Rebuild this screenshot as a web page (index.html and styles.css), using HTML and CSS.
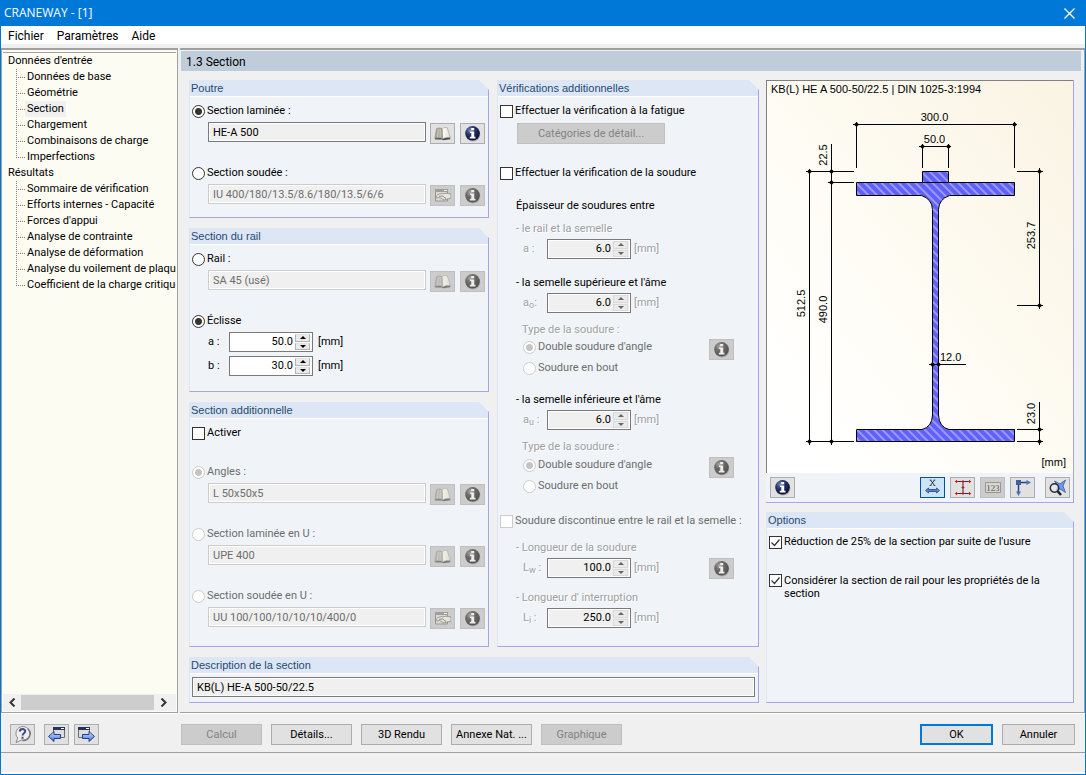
FILE: index.html
```html
<!DOCTYPE html>
<html lang="fr">
<head>
<meta charset="utf-8">
<meta name="viewport" content="width=device-width, initial-scale=1">
<title>CRANEWAY - [1]</title>
<link rel="stylesheet" href="styles.css">
</head>
<body>
<svg class="defs" aria-hidden="true">
  <defs>
    <radialGradient id="ball" cx="35%" cy="30%" r="75%">
      <stop offset="0" stop-color="#8790ba"/><stop offset=".4" stop-color="#28366f"/><stop offset="1" stop-color="#050b2e"/>
    </radialGradient>
    <linearGradient id="page" x1="0" x2="1"><stop offset="0" stop-color="#fff"/><stop offset="1" stop-color="#e4dfce"/></linearGradient>
    <linearGradient id="blue" x1="0" y1="0" x2="0" y2="1"><stop offset="0" stop-color="#d6e4ff"/><stop offset="1" stop-color="#3d6fd0"/></linearGradient>
    <symbol id="i-info" viewBox="0 0 17 17">
      <ellipse cx="9" cy="9.600" rx="7.300" ry="7" fill="#000" opacity=".25"/>
      <circle cx="8.500" cy="8.300" r="7.300" fill="url(#ball)"/>
      <path d="M7.200 2.900h3v2.300h-3zM6 6.500h4.200v5.300h1.300V13.500H5.800v-1.700h1.500V8H6z" fill="#fff"/>
    </symbol>
    <symbol id="i-book" viewBox="0 0 17 17">
      <path d="M.8 13.200 1.200 14.600H8l1 .6 7.300-1V12.500z" fill="#4c4c50"/>
      <path d="M2.600 3.600C4.500 2.600 6.500 2.700 8.300 4l.5 10C6.500 12.600 3.500 12.500.8 13.400z" fill="#aaa698" stroke="#77746a" stroke-width=".5"/>
      <path d="M4.300 3.700 3.500 12M6.300 4l-.2 8.300" stroke="#d6d3c8" stroke-width=".8" fill="none"/>
      <path d="M8.300 4c1.300-1.500 3.300-1.900 5-1.200l3 9.700c-2.600-.5-5.200 0-7.500 1.500z" fill="url(#page)" stroke="#8f8b7f" stroke-width=".5"/>
    </symbol>
    <symbol id="i-hand" viewBox="0 0 17 17">
      <path d="M1.500 2.500h12v11.500h-12z" fill="#dcdad2" stroke="#77776f"/>
      <path d="M1 2h13v3H1z" fill="#85857d"/><path d="M10 3h3v1h-3z" fill="#fff"/>
      <path d="M2 9.500C4 7 6.500 6.200 9 6.800l3-.6 5 .8v4.200L13 12l-3 1-4.500-2.500-3 .5z" fill="#eceae2" stroke="#66665e" stroke-width=".8"/>
      <path d="M5 9.300 8.500 9 12 11.500" stroke="#66665e" fill="none"/>
    </symbol>
    <symbol id="i-help" viewBox="0 0 19 19">
      <path d="M3 17.500 4.800 13A7 6.800 0 1 1 8.500 15z" fill="#eee" stroke="#8c8c8c"/>
      <path d="M14.500 3.500a7 6.800 0 0 1-5 12" fill="none" stroke="#777" stroke-width="1.500"/>
      <path d="M6.800 6.500c.2-3.400 5.700-3.300 5.400 0-.2 1.900-2.500 1.800-2.600 4M9.500 11.800v1.900" fill="none" stroke="#3a4a86" stroke-width="2"/>
    </symbol>
    <symbol id="i-prev" viewBox="0 0 19 19">
      <path d="M6.500 2.500h11v10h-11z" fill="#ddd" stroke="#6a6a72"/>
      <path d="M6 2h12v3H6z" fill="#26335f"/><path d="M14 3h3v1h-3z" fill="#fff"/>
      <path d="M1.500 11.500 7 6.500v3h6.500v4H7v3z" fill="url(#blue)" stroke="#203f8c"/>
    </symbol>
    <symbol id="i-next" viewBox="0 0 19 19">
      <path d="M1.500 2.500h11v10h-11z" fill="#ddd" stroke="#6a6a72"/>
      <path d="M1 2h12v3H1z" fill="#26335f"/><path d="M9 3h3v1H9z" fill="#fff"/>
      <path d="M17.500 11.500 12 6.500v3H5.500v4H12v3z" fill="url(#blue)" stroke="#203f8c"/>
    </symbol>
    <symbol id="i-dimx" viewBox="0 0 19 19">
      <path d="M7.500 2l4 5.500M11.500 2l-4 5.500" stroke="#222" stroke-width=".9" fill="none"/>
      <path d="M6.500 2h2M10.500 2h2M6.500 7.500h2M10.500 7.500h2" stroke="#222" stroke-width=".6" fill="none"/>
      <path d="M2.500 12.500 5.500 10v1.500h8V10l3 2.500-3 2.500v-1.500h-8V15z" fill="#5b82cc" stroke="#36589b"/>
    </symbol>
    <symbol id="i-beam" viewBox="0 0 19 19">
      <path d="M3 3.500h14M3 15.500h14M10 3.500v12" stroke="#30303c" fill="none"/>
      <path d="M2 3.500h3M8.500 3.500h3M15 3.500h3M2 15.500h3M8.500 15.500h3M15 15.500h3M8.500 9.500h3M3.500 2v3M10 2v3M16.500 2v3M3.500 14v3M10 14v3M16.500 14v3M10 8v3" stroke="#e01515" fill="none"/>
    </symbol>
    <symbol id="i-num" viewBox="0 0 19 19">
      <path d="M2.500 4.500h15v10h-15z" fill="#d6d6ce" stroke="#77776f"/>
      <text x="10" y="13" text-anchor="middle" class="num">123</text>
    </symbol>
    <symbol id="i-axes" viewBox="0 0 19 19">
      <path d="M5.500 15V4.500H15" stroke="#2d4172" stroke-width="1.500" fill="none"/>
      <path d="M13.500 2 18 4.500 13.500 7zM3 13.500l2.500 4.500L8 13.500z" fill="#4a72bd"/><path d="M3 2h5v5H3z" fill="#3e5faa"/>
    </symbol>
    <symbol id="i-zoom" viewBox="0 0 19 19">
      <path d="M6.500 3 12 6 17.500 2 15 8l2.500 6.500L12 11 8 13.500 9.800 8.500z" fill="#6f9af0" stroke="#36589b" stroke-width=".8"/>
      <circle cx="6.500" cy="10" r="4.200" fill="#e8eef8" fill-opacity=".6" stroke="#26262e" stroke-width="1.400"/>
      <path d="M9.500 13 13 17" stroke="#222" stroke-width="2.500"/>
    </symbol>
  </defs>
</svg>

<div class="window">
  <header class="titlebar">
    <h1 class="titlebar-text">CRANEWAY - [1]</h1>
    <button class="close" type="button" aria-label="Fermer"><svg viewBox="0 0 11 11"><path d="M.5.5l10 10M10.500.5l-10 10" stroke="#fff" stroke-width="1.300" fill="none"/></svg></button>
  </header>
  <nav class="menubar">
    <button type="button">Fichier</button>
    <button type="button">Paramètres</button>
    <button type="button">Aide</button>
  </nav>

  <div class="main">
    <aside class="tree">
      <div class="tree-scroll">
        <ul class="tree-root">
          <li>Données d'entrée
            <ul>
              <li><a href="#">Données de base</a></li>
              <li><a href="#">Géométrie</a></li>
              <li><a href="#" class="current" aria-current="page">Section</a></li>
              <li><a href="#">Chargement</a></li>
              <li><a href="#">Combinaisons de charge</a></li>
              <li><a href="#">Imperfections</a></li>
            </ul>
          </li>
          <li>Résultats
            <ul>
              <li><a href="#">Sommaire de vérification</a></li>
              <li><a href="#">Efforts internes - Capacité</a></li>
              <li><a href="#">Forces d'appui</a></li>
              <li><a href="#">Analyse de contrainte</a></li>
              <li><a href="#">Analyse de déformation</a></li>
              <li><a href="#">Analyse du voilement de plaque</a></li>
              <li><a href="#">Coefficient de la charge critique</a></li>
            </ul>
          </li>
        </ul>
      </div>
      <div class="hscroll">
        <button type="button" aria-label="Défiler à gauche"><svg viewBox="0 0 7 9"><path d="M5.500.500 1.500 4.500l4 4" stroke="#333" stroke-width="2" fill="none"/></svg></button>
        <span class="thumb"></span>
        <button type="button" aria-label="Défiler à droite"><svg viewBox="0 0 7 9"><path d="M1.500.500 5.500 4.500l-4 4" stroke="#333" stroke-width="2" fill="none"/></svg></button>
      </div>
    </aside>

    <main class="panel">
      <h2 class="panel-title">1.3 Section</h2>
      <div class="panel-body">
        <div class="left">
          <div class="stack">
            <section class="group">
              <h3>Poutre</h3>
              <div class="group-body">
                <div class="choice">
                  <label class="check"><input type="radio" name="poutre" checked>Section laminée :</label>
                  <div class="field-row">
                    <input class="field" type="text" value="HE-A 500" readonly aria-label="Section laminée">
                    <button class="icon-btn" type="button" aria-label="Bibliothèque"><svg><use href="#i-book"/></svg></button>
                    <button class="icon-btn" type="button" aria-label="Info"><svg><use href="#i-info"/></svg></button>
                  </div>
                </div>
                <div class="choice">
                  <label class="check"><input type="radio" name="poutre">Section soudée :</label>
                  <div class="field-row">
                    <input class="field" type="text" value="IU 400/180/13.5/8.6/180/13.5/6/6" disabled aria-label="Section soudée">
                    <button class="icon-btn" type="button" disabled aria-label="Paramètres"><svg><use href="#i-hand"/></svg></button>
                    <button class="icon-btn" type="button" disabled aria-label="Info"><svg><use href="#i-info"/></svg></button>
                  </div>
                </div>
              </div>
            </section>

            <section class="group">
              <h3>Section du rail</h3>
              <div class="group-body rail">
                <div class="choice">
                  <label class="check"><input type="radio" name="rail">Rail :</label>
                  <div class="field-row">
                    <input class="field" type="text" value="SA 45 (usé)" disabled aria-label="Rail">
                    <button class="icon-btn" type="button" disabled aria-label="Bibliothèque"><svg><use href="#i-book"/></svg></button>
                    <button class="icon-btn" type="button" disabled aria-label="Info"><svg><use href="#i-info"/></svg></button>
                  </div>
                </div>
                <div class="choice">
                  <label class="check"><input type="radio" name="rail" checked>Éclisse</label>
                  <div class="spins">
                    <div class="spin-row"><label for="ea">a :</label><span class="spin"><input id="ea" type="text" value="50.0"><span class="arrows"><button type="button" aria-label="Plus"></button><button type="button" aria-label="Moins"></button></span></span><span>[mm]</span></div>
                    <div class="spin-row"><label for="eb">b :</label><span class="spin"><input id="eb" type="text" value="30.0"><span class="arrows"><button type="button" aria-label="Plus"></button><button type="button" aria-label="Moins"></button></span></span><span>[mm]</span></div>
                  </div>
                </div>
              </div>
            </section>

            <section class="group grow">
              <h3>Section additionnelle</h3>
              <div class="group-body">
                <label class="check activate"><input type="checkbox">Activer</label>
                <div class="choice">
                  <label class="check off"><input type="radio" name="add" checked disabled>Angles :</label>
                  <div class="field-row">
                    <input class="field" type="text" value="L 50x50x5" disabled aria-label="Angles">
                    <button class="icon-btn" type="button" disabled aria-label="Bibliothèque"><svg><use href="#i-book"/></svg></button>
                    <button class="icon-btn" type="button" disabled aria-label="Info"><svg><use href="#i-info"/></svg></button>
                  </div>
                </div>
                <div class="choice">
                  <label class="check off"><input type="radio" name="add" disabled>Section laminée en U :</label>
                  <div class="field-row">
                    <input class="field" type="text" value="UPE 400" disabled aria-label="Section laminée en U">
                    <button class="icon-btn" type="button" disabled aria-label="Bibliothèque"><svg><use href="#i-book"/></svg></button>
                    <button class="icon-btn" type="button" disabled aria-label="Info"><svg><use href="#i-info"/></svg></button>
                  </div>
                </div>
                <div class="choice">
                  <label class="check off"><input type="radio" name="add" disabled>Section soudée en U :</label>
                  <div class="field-row">
                    <input class="field" type="text" value="UU 100/100/10/10/10/400/0" disabled aria-label="Section soudée en U">
                    <button class="icon-btn" type="button" disabled aria-label="Paramètres"><svg><use href="#i-hand"/></svg></button>
                    <button class="icon-btn" type="button" disabled aria-label="Info"><svg><use href="#i-info"/></svg></button>
                  </div>
                </div>
              </div>
            </section>
          </div>

          <section class="group">
            <h3>Vérifications additionnelles</h3>
            <div class="group-body verif">
              <label class="check"><input type="checkbox">Effectuer la vérification à la fatigue</label>
              <button class="btn detail" type="button" disabled>Catégories de détail...</button>
              <label class="check weld"><input type="checkbox">Effectuer la vérification de la soudure</label>

              <div class="weld-set">
                <p>Épaisseur de soudures entre</p>
                <div class="block">
                  <p class="etched">- le rail et la semelle</p>
                  <div class="spin-row etched"><label for="wa">a :</label><span class="spin off"><input id="wa" type="text" value="6.0" readonly><span class="arrows"><button type="button" disabled aria-label="Plus"></button><button type="button" disabled aria-label="Moins"></button></span></span><span>[mm]</span></div>
                </div>
                <div class="block">
                  <p>- la semelle supérieure et l'âme</p>
                  <div class="spin-row etched"><label for="wo">a<small>o</small>:</label><span class="spin off"><input id="wo" type="text" value="6.0" readonly><span class="arrows"><button type="button" disabled aria-label="Plus"></button><button type="button" disabled aria-label="Moins"></button></span></span><span>[mm]</span></div>
                  <p class="type etched">Type de la soudure :</p>
                  <div class="type-row">
                    <div class="type-list">
                      <label class="check off"><input type="radio" name="t1" checked disabled>Double soudure d'angle</label>
                      <label class="check off"><input type="radio" name="t1" disabled>Soudure en bout</label>
                    </div>
                    <button class="icon-btn" type="button" disabled aria-label="Info"><svg><use href="#i-info"/></svg></button>
                  </div>
                </div>
                <div class="block lower">
                  <p>- la semelle inférieure et l'âme</p>
                  <div class="spin-row etched"><label for="wu">a<small>u</small> :</label><span class="spin off"><input id="wu" type="text" value="6.0" readonly><span class="arrows"><button type="button" disabled aria-label="Plus"></button><button type="button" disabled aria-label="Moins"></button></span></span><span>[mm]</span></div>
                  <p class="type etched">Type de la soudure :</p>
                  <div class="type-row">
                    <div class="type-list">
                      <label class="check off"><input type="radio" name="t2" checked disabled>Double soudure d'angle</label>
                      <label class="check off"><input type="radio" name="t2" disabled>Soudure en bout</label>
                    </div>
                    <button class="icon-btn" type="button" disabled aria-label="Info"><svg><use href="#i-info"/></svg></button>
                  </div>
                </div>
              </div>

              <label class="check off gapped"><input type="checkbox" disabled>Soudure discontinue entre le rail et la semelle :</label>
              <div class="weld-set lengths">
                <p class="etched">- Longueur de la soudure</p>
                <div class="spin-row etched"><label for="lw">L<small>w</small> :</label><span class="spin off"><input id="lw" type="text" value="100.0" readonly><span class="arrows"><button type="button" disabled aria-label="Plus"></button><button type="button" disabled aria-label="Moins"></button></span></span><span>[mm]</span>
                  <button class="icon-btn end" type="button" disabled aria-label="Info"><svg><use href="#i-info"/></svg></button></div>
                <p class="etched next">- Longueur d' interruption</p>
                <div class="spin-row etched"><label for="li">L<small>i</small> :</label><span class="spin off"><input id="li" type="text" value="250.0" readonly><span class="arrows"><button type="button" disabled aria-label="Plus"></button><button type="button" disabled aria-label="Moins"></button></span></span><span>[mm]</span></div>
              </div>
            </div>
          </section>

          <section class="group wide">
            <h3>Description de la section</h3>
            <div class="group-body description">
              <input class="field" type="text" value="KB(L) HE-A 500-50/22.5" readonly aria-label="Description de la section">
            </div>
          </section>
        </div>

        <div class="right">
          <section class="viewer">
            <div class="canvas">
              <p class="canvas-title">KB(L) HE A 500-50/22.5 | DIN 1025-3:1994</p>
              <svg class="drawing" viewBox="0 16 306 376" role="img" aria-label="Coupe cotée du profilé">
                <defs>
                  <pattern id="hatch" width="6" height="6" patternUnits="userSpaceOnUse" patternTransform="rotate(-45)">
                    <rect width="6" height="6" fill="#6060fa"/><path d="M3 0v6" stroke="#d4d4ff" stroke-width="1"/>
                  </pattern>
                </defs>
                <path d="M155.500 90.500h26v11h66v13H182.500Q172 118 171.500 128.500V334Q172 346 182 348.500H247.500v12H89.500v-12H155Q165 346 165.500 334V128.500Q165 118 154.500 114.500H89.500v-13h66zM155.500 101.500h26" fill="url(#hatch)" stroke="#000"/>
                <g stroke="#000" fill="none">
                  <path d="M86 43.500h164M89.500 41v46M247.500 41v46"/>
                  <path d="M152 65.500h32M155.500 63v24M181.500 63v24"/>
                  <path d="M39 90.500h48M61 101.500h26M39 360.500h48M42.500 88v276M64.500 63v301"/>
                  <path d="M250 90.500h26M250 224.500h26M272.500 87v141"/>
                  <path d="M250 348.500h26M250 360.500h26M272.500 321v43"/>
                  <path d="M162 283.500h37"/>
                </g>
                <g>
                  <path d="M87 43.500l2.500-2.500 2.500 2.500-2.500 2.500zM245 43.500l2.500-2.500 2.500 2.500-2.500 2.500zM153 65.500l2.500-2.500 2.500 2.500-2.500 2.500zM179 65.500l2.500-2.500 2.500 2.500-2.500 2.500z"/>
                  <path d="M40 90.500l2.500-2.500 2.500 2.500-2.500 2.500zM62 90.500l2.500-2.500 2.500 2.500-2.500 2.500zM62 101.500l2.500-2.500 2.500 2.500-2.500 2.500zM40 360.500l2.500-2.500 2.500 2.500-2.500 2.500zM62 360.500l2.500-2.500 2.500 2.500-2.500 2.500z"/>
                  <path d="M270 90.500l2.500-2.500 2.500 2.500-2.500 2.500zM270 224.500l2.500-2.500 2.500 2.500-2.500 2.500zM270 348.500l2.500-2.500 2.500 2.500-2.500 2.500zM270 360.500l2.500-2.500 2.500 2.500-2.500 2.500zM163 283.500l2.500-2.500 2.500 2.500-2.500 2.500zM169 283.500l2.500-2.500 2.500 2.500-2.500 2.500z"/>
                </g>
                <g class="dims">
                  <text x="167.500" y="40" text-anchor="middle">300.0</text>
                  <text x="167.500" y="62" text-anchor="middle">50.0</text>
                  <text x="173" y="280">12.0</text>
                  <text transform="translate(60 74) rotate(-90)" text-anchor="middle">22.5</text>
                  <text transform="translate(38 222.500) rotate(-90)" text-anchor="middle">512.5</text>
                  <text transform="translate(60 228.500) rotate(-90)" text-anchor="middle">490.0</text>
                  <text transform="translate(268 154.500) rotate(-90)" text-anchor="middle">253.7</text>
                  <text transform="translate(268 332.500) rotate(-90)" text-anchor="middle">23.0</text>
                  <text x="299" y="385" text-anchor="end">[mm]</text>
                </g>
              </svg>
            </div>
            <div class="toolbar">
              <button class="icon-btn first" type="button" aria-label="Info"><svg><use href="#i-info"/></svg></button>
              <button class="icon-btn pressed" type="button" aria-pressed="true" aria-label="Cotes"><svg class="big"><use href="#i-dimx"/></svg></button>
              <button class="icon-btn" type="button" aria-label="Points de contrainte"><svg class="big"><use href="#i-beam"/></svg></button>
              <button class="icon-btn" type="button" disabled aria-label="Numérotation"><svg class="big"><use href="#i-num"/></svg></button>
              <button class="icon-btn" type="button" aria-label="Axes"><svg class="big"><use href="#i-axes"/></svg></button>
              <button class="icon-btn last" type="button" aria-label="Tout afficher"><svg class="big"><use href="#i-zoom"/></svg></button>
            </div>
          </section>

          <section class="group grow">
            <h3>Options</h3>
            <div class="group-body options">
              <label class="check"><input type="checkbox" checked>Réduction de 25% de la section par suite de l'usure</label>
              <label class="check multi"><input type="checkbox" checked><span>Considérer la section de rail pour les propriétés de la section</span></label>
            </div>
          </section>
        </div>
      </div>
    </main>
  </div>

  <footer class="footer">
    <button class="icon-btn" type="button" aria-label="Aide"><svg class="big"><use href="#i-help"/></svg></button>
    <div class="pair">
      <button class="icon-btn" type="button" aria-label="Précédent"><svg class="big"><use href="#i-prev"/></svg></button>
      <button class="icon-btn" type="button" aria-label="Suivant"><svg class="big"><use href="#i-next"/></svg></button>
    </div>
    <div class="actions">
      <button class="btn" type="button" disabled>Calcul</button>
      <button class="btn" type="button">Détails...</button>
      <button class="btn" type="button">3D Rendu</button>
      <button class="btn" type="button">Annexe Nat. ...</button>
      <button class="btn" type="button" disabled>Graphique</button>
    </div>
    <div class="confirm">
      <button class="btn default" type="button">OK</button>
      <button class="btn" type="button">Annuler</button>
    </div>
  </footer>
  <div class="status" role="status"></div>
</div>
</body>
</html>
```
FILE: styles.css
```css
* { box-sizing: border-box; }
body {
  margin: 0;
  font: 11px/16px Roboto, "DejaVu Sans Condensed", sans-serif;
  color: #000;
  background: #f0f0f0;
}
h1, h2, h3, p, ul { margin: 0; padding: 0; font-weight: normal; }
ul { list-style: none; }
button, input { font: inherit; color: inherit; margin: 0; padding: 0; border-radius: 0; }
.defs { position: absolute; width: 0; height: 0; }

.window {
  display: flex;
  flex-direction: column;
  min-height: 100vh;
  border: 1px solid #0078d7;
  border-top: 0;
}
.titlebar {
  display: flex;
  align-items: center;
  justify-content: space-between;
  height: 26px;
  padding: 0 10px 0 3px;
  background: #0078d7;
  color: #fff;
}
.titlebar-text { font: 12px/26px "Open Sans", "Noto Sans", sans-serif; }
.close { display: flex; border: 0; background: none; }
.close svg { width: 11px; height: 11px; }
.menubar {
  display: flex;
  gap: 13px;
  height: 18px;
  padding: 0 7px;
  margin-bottom: 4px;
  background: #fff;
}
.menubar button { border: 0; background: none; font-size: 12px; line-height: 20px; }

.main { display: flex; flex: 1; gap: 2px; }
.tree {
  display: flex;
  flex-direction: column;
  flex: none;
  width: 177px;
  padding: 2px 1px 1px;
  border: 1px solid #a0a0a0;
  border-top-width: 2px;
  background: #fcfcf3;
}
.tree-scroll { flex: 1; overflow: hidden; border-top: 1px solid #a0a0a0; white-space: nowrap; }
.tree-root { padding-left: 5px; }
.tree-root ul { padding: 0 0 0 8px; }
.tree-root ul li {
  display: flex;
  align-items: center;
  height: 16px;
  background:
    repeating-linear-gradient(90deg, #808080 0 1px, transparent 1px 2px) 0 8px / 9px 1px no-repeat,
    repeating-linear-gradient(#808080 0 1px, transparent 1px 2px) 0 0 / 1px 16px no-repeat;
}
.tree-root ul li:last-child {
  background:
    repeating-linear-gradient(90deg, #808080 0 1px, transparent 1px 2px) 0 8px / 9px 1px no-repeat,
    repeating-linear-gradient(#808080 0 1px, transparent 1px 2px) 0 0 / 1px 9px no-repeat;
}
.tree-root a { margin-left: 9px; padding: 0 2px; color: inherit; text-decoration: none; }
.tree-root .current { background: #f0f0f0; }
.hscroll { display: flex; align-items: center; height: 17px; background: #f0f0f0; }
.hscroll button { display: flex; justify-content: center; width: 18px; border: 0; background: none; }
.hscroll svg { width: 7px; height: 9px; }
.hscroll .thumb { width: 133px; height: 15px; background: #cdcdcd; }

.panel {
  display: flex;
  flex-direction: column;
  flex: 1;
  border: solid #a0a0a0;
  border-width: 2px 1px 1px 0;
  min-width: 0;
}
.panel-title {
  margin: 1px 3px 0 1px;
  padding: 1px 5px;
  height: 20px;
  background: #bfcddb;
  font-size: 12px;
  line-height: 20px;
}
.panel-body { display: flex; flex: 1; gap: 7px; padding: 9px 10px 9px 9px; }
.left {
  display: grid;
  flex: 570 1 0;
  grid-template-columns: 300fr 262fr;
  grid-template-rows: 1fr auto;
  gap: 10px 8px;
}
.right { display: flex; flex: 308 1 0; flex-direction: column; gap: 9px; }
.stack { display: flex; flex-direction: column; gap: 10px; }
.wide { grid-column: 1 / -1; }
.grow { flex: 1; }

.group {
  border: solid #a5a5ee;
  border-width: 0 1px 1px 0;
  border-left: 1px solid #dce6f5;
  background: #f0f4f9;
  clip-path: polygon(0 0, calc(100% - 10px) 0, 100% 10px, 100% 100%, 0 100%);
}
.group h3 {
  height: 17px;
  padding-left: 1px;
  border-bottom: 1px solid #fff;
  background: #dce6f5;
  color: #1f4a73;
  font: 11px/16px "Liberation Sans", Arial, sans-serif;
}
.group-body { display: flex; flex-direction: column; gap: 21px; padding: 6px 3px 11px 2px; }
.rail { padding-bottom: 15px; }
.description { padding: 3px 3px 5px 2px; }
.choice { display: flex; flex-direction: column; gap: 3px; }

.check { display: flex; align-items: center; gap: 2px; height: 16px; }
.check input {
  appearance: none;
  flex: none;
  width: 13px;
  height: 13px;
  border: 1px solid #333;
  background: #fff;
}
.check input[type="radio"] { border-radius: 50%; }
.check input[type="radio"]:checked { background: radial-gradient(circle, #333 0 3px, #fff 4px); }
.check input[type="checkbox"]:checked {
  background: #fff url("data:image/svg+xml,%3Csvg xmlns='http://www.w3.org/2000/svg' viewBox='0 0 11 11'%3E%3Cpath d='M1.500 5.500l3 3 5-6' fill='none' stroke='%23333' stroke-width='1.200'/%3E%3C/svg%3E");
}
.check input:disabled { border-color: #ccc; }
.check input[type="radio"]:checked:disabled { background: radial-gradient(circle, #c4c4c4 0 3px, #fff 4px); }
.check.off { color: #6d6d6d; }
.activate { margin-bottom: 2px; }
.multi { align-items: flex-start; height: auto; line-height: 13px; }

.field-row { display: flex; gap: 5px; height: 22px; padding-left: 16px; }
.field {
  flex: 1;
  min-width: 0;
  height: 20px;
  padding: 0 4px;
  border: 1px solid #7a7a7a;
  box-shadow: inset 0 0 0 1px #fff;
  background: #f0f0f0;
}
.description .field { flex: none; }
.field:disabled { border-color: #ccc; color: #6d6d6d; }
.icon-btn {
  display: flex;
  align-items: center;
  justify-content: center;
  flex: none;
  width: 25px;
  height: 21px;
  margin-top: 1px;
  border: 1px solid #adadad;
  background: #e1e1e1;
}
.field-row .icon-btn:first-of-type { margin-left: -1px; }
.icon-btn svg { width: 17px; height: 17px; }
.icon-btn svg.big { width: 19px; height: 19px; }
.icon-btn:disabled { border-color: #bfbfbf; background: #ccc; }
.icon-btn:disabled svg { filter: grayscale(1) sepia(.15); opacity: .65; }
.num { font: bold 9px "Liberation Serif", serif; fill: #55554f; }

.spins { display: flex; flex-direction: column; gap: 4px; padding-left: 16px; }
.spin-row { display: flex; align-items: center; height: 20px; }
.spin-row label { width: 21px; flex: none; white-space: nowrap; }
.spin-row small { position: relative; top: 2px; font-size: 9px; line-height: 1; }
.spin {
  display: flex;
  width: 84px;
  height: 20px;
  margin-right: 5px;
  padding: 1px;
  border: 1px solid #7a7a7a;
  background: #fff;
  color: #000;
  text-shadow: none;
}
.spin input { flex: 1; min-width: 0; border: 0; background: transparent; text-align: right; padding-right: 2px; }
.spin.off { box-shadow: inset 0 0 0 1px #fff; background: #f0f0f0; }
.arrows { display: flex; flex-direction: column; width: 15px; margin-right: 1px; gap: 1px; }
.arrows button {
  display: flex;
  align-items: center;
  justify-content: center;
  flex: 1;
  min-height: 0;
  border: 1px solid #b5b5b5;
  border-top-color: #e4e4e4;
  background: #eaeaea;
}
.arrows button::before { content: ""; border: solid transparent; border-width: 0 3px 3px; border-bottom-color: #000; }
.arrows button:last-child::before { border-width: 3px 3px 0; border-top-color: #000; }
.arrows button:disabled { border-color: #d9d9d9; }
.arrows button:disabled::before { border-bottom-color: #666; }
.arrows button:last-child:disabled::before { border-top-color: #666; }
.etched { color: #a0a0a0; text-shadow: 1px 1px 0 #fff; }

.verif { gap: 0; }
.detail { width: 148px; height: 21px; margin: 4px 0 0 17px; }
.weld { margin-top: 21px; }
.weld-set { display: flex; flex-direction: column; padding: 17px 21px 0 16px; }
.weld-set .spin-row { margin-top: 2px; }
.weld-set .spin-row label { width: 31px; padding-left: 7px; }
.weld-set .spin { margin-right: 3px; }
.block { margin-top: 7px; }
.block + .block { margin-top: 16px; }
.type { margin-top: 9px; padding-left: 6px; }
.type-row { display: flex; justify-content: space-between; align-items: flex-start; margin-top: 1px; padding-left: 7px; }
.lower .type-row { margin-top: 2px; }
.type-row .icon-btn { margin-top: 0; }
.type-list { display: flex; flex-direction: column; gap: 5px; }
.gapped { margin-top: 19px; }
.lengths { padding-top: 11px; }
.end { margin: 0 0 0 auto; }
.next { margin-top: 12px; }

.viewer {
  border: solid #a5a5ee;
  border-width: 0 1px 1px 0;
  background: #f0f4f9;
}
.canvas {
  border: solid #808080;
  border-width: 1px 0 0 1px;
  background: linear-gradient(to top right, #fff 10%, #fefcf4 45%, #f9f3e2);
}
.canvas-title { padding-left: 4px; font: 11px/16px "Liberation Sans", Arial, sans-serif; }
.drawing { display: block; width: 100%; }
.dims { font: 11px "Liberation Sans", Arial, sans-serif; }
.toolbar { display: flex; gap: 5px; padding: 3px 3px 4px 4px; }
.first { margin-right: auto; }
.last { margin-left: 5px; }
.pressed { border-color: #005499; background: #cce4f7; }
.options { gap: 24px; padding: 5px 30px 11px 2px; }

.footer { display: flex; align-items: flex-start; padding: 10px 10px 7px 9px; border-top: 1px solid #fff; }
.pair { display: flex; gap: 5px; margin-left: 9px; }
.actions { display: flex; gap: 9px; margin-left: 82px; }
.confirm { display: flex; gap: 9px; margin-left: auto; }
.btn {
  height: 21px;
  border: 1px solid #adadad;
  background: #e1e1e1;
  text-align: center;
  white-space: nowrap;
}
.btn:disabled { border-color: #bfbfbf; background: #ccc; color: #838383; }
.footer .btn, .footer .icon-btn { margin-top: 0; }
.actions .btn { width: 81px; }
.confirm .btn { width: 73px; }
.default { border: 2px solid #0078d7; }
.status { height: 22px; border-top: 1px solid #a0a0a0; border-bottom: 2px solid #fff; }
```
